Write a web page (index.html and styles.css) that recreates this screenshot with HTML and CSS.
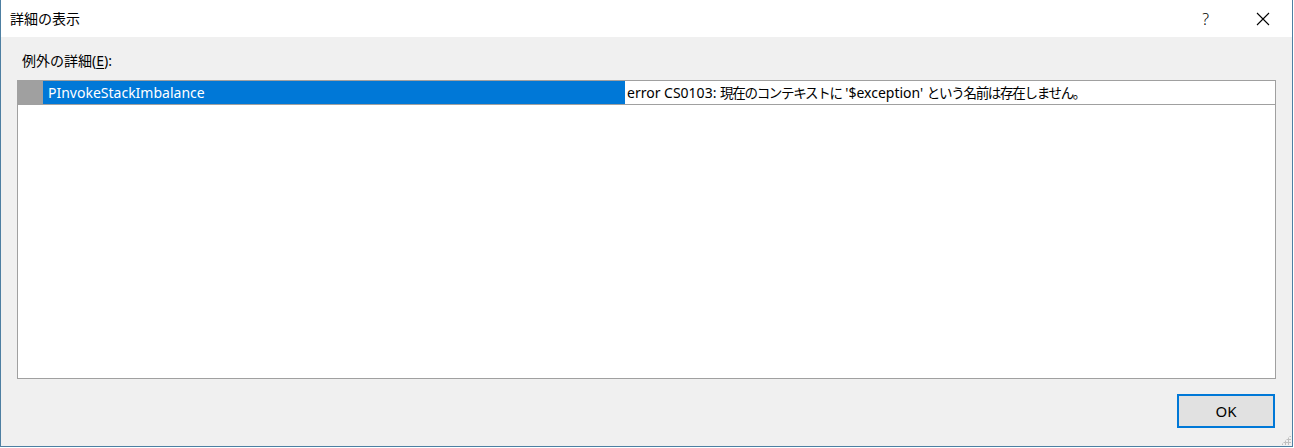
FILE: index.html
```html
<!DOCTYPE html>
<html lang="ja">
<head>
<meta charset="utf-8">
<link rel="stylesheet" href="styles.css">
</head>
<body>
<div class="window">
  <div class="titlebar">
    <span class="title">詳細の表示</span>
    <div class="controls">
      <span class="help">?</span>
      <svg class="close" width="14" height="14" viewBox="0 0 14 14"><path d="M1 1 L13 13 M13 1 L1 13" stroke="#000" stroke-width="1.1" fill="none"/></svg>
    </div>
  </div>
  <div class="content">
    <div class="label">例外の詳細(<u>E</u>):</div>
    <div class="grid">
      <div class="row">
        <div class="cell head"></div>
        <div class="cell name">PInvokeStackImbalance</div>
        <div class="cell value">error CS0103: <span class="ja">現在のコンテキストに</span> '$exception' <span class="ja">という名前は存在しません。</span></div>
      </div>
    </div>
    <div class="footer">
      <button class="ok">OK</button>
    </div>
  </div>
  <div class="grip"></div>
</div>
</body>
</html>
```
FILE: styles.css
```css
html, body {
  margin: 0;
  padding: 0;
  background: #ffffff;
}
body {
  font-family: "Noto Sans", "Noto Sans CJK JP", sans-serif;
  color: #000;
}
.window {
  position: relative;
  width: 1293px;
  height: 447px;
  box-sizing: border-box;
  border-left: 1px solid #4d7fa2;
  border-right: 1px solid #4d7fa2;
  border-bottom: 1px solid #4d7fa2;
  display: flex;
  flex-direction: column;
  background: #f0f0f0;
}
.titlebar {
  height: 37px;
  background: #ffffff;
  display: flex;
  align-items: center;
  justify-content: space-between;
  flex: none;
}
.title {
  font-size: 14px;
  padding-left: 9px;
  margin-top: -1px;
}
.controls {
  display: flex;
  align-items: center;
}
.help {
  font-size: 16px;
  font-weight: 300;
  margin-right: 47px;
}
.close {
  margin-right: 22px;
}
.content {
  flex: 1;
  display: flex;
  flex-direction: column;
  padding: 14px 16px 0 16px;
}
.label {
  font-size: 14px;
  line-height: 20px;
  height: 20px;
  padding-left: 5px;
  margin-bottom: 9px;
}
.label u {
  text-decoration-thickness: 1px;
  text-underline-offset: 2px;
}
.grid {
  height: 299px;
  box-sizing: border-box;
  border: 1px solid #a0a0a0;
  background: #fff;
}
.row {
  display: flex;
  height: 24px;
  box-sizing: border-box;
  border-bottom: 1px solid #a0a0a0;
}
.cell {
  height: 23px;
  line-height: 23px;
  font-size: 14px;
  white-space: nowrap;
  overflow: hidden;
}
.ja {
  font-size: 13.5px;
  letter-spacing: -1.3px;
}
.head {
  width: 25px;
  background: #a0a0a0;
}
.name {
  width: 582px;
  background: #0078d7;
  color: #fff;
  padding-left: 5px;
  box-sizing: border-box;
}
.value {
  flex: 1;
  padding-left: 2px;
}
.footer {
  display: flex;
  justify-content: flex-end;
  padding-top: 15px;
}
.ok {
  width: 98px;
  height: 34px;
  margin-right: 1px;
  box-sizing: border-box;
  border: 2px solid #0078d7;
  background: #e1e1e1;
  font-family: "Noto Sans", sans-serif;
  font-size: 15px;
  color: #000;
  padding: 0;
}
.grip {
  position: absolute;
  right: 1px;
  bottom: 1px;
  width: 10px;
  height: 10px;
  background:
    radial-gradient(circle, #c0c0c0 1px, transparent 1.2px) 0 0 / 3px 3px;
  clip-path: polygon(100% 0, 100% 100%, 0 100%);
}
```
